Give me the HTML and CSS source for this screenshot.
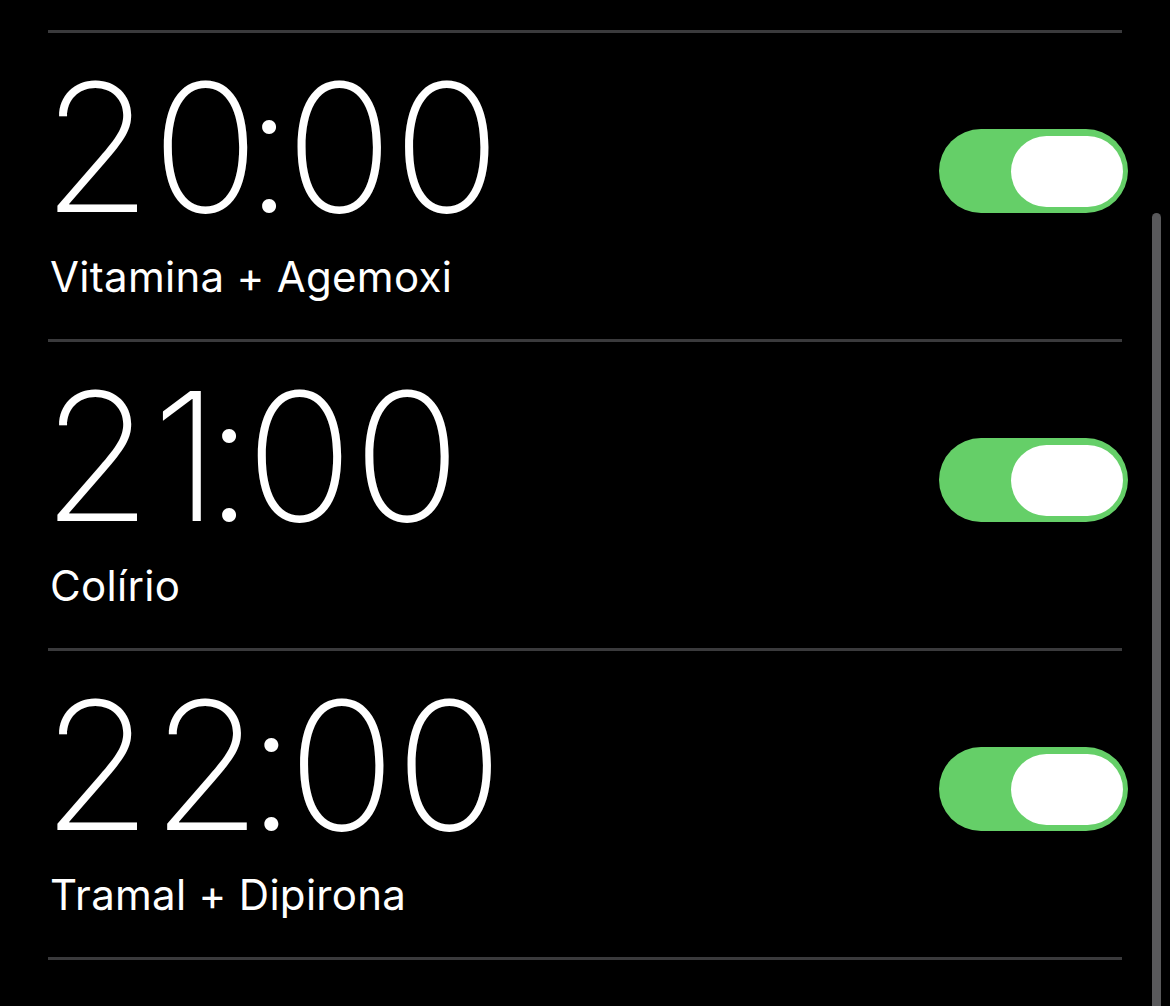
FILE: index.html
```html
<!DOCTYPE html>
<html lang="pt">
<head>
<meta charset="utf-8">
<title>Alarmes</title>
<link rel="stylesheet" href="styles.css">
</head>
<body>
<div class="screen">
  <div class="list">
    <div class="row">
      <div class="info">
        <div class="time">2<span class="tight">0</span><span class="colon">:</span>00</div>
        <div class="label">Vitamina + Agemoxi</div>
      </div>
      <div class="toggle"><div class="knob"></div></div>
    </div>
    <div class="row">
      <div class="info">
        <div class="time">2<span class="tight">1</span><span class="colon">:</span>00</div>
        <div class="label">Colírio</div>
      </div>
      <div class="toggle"><div class="knob"></div></div>
    </div>
    <div class="row">
      <div class="info">
        <div class="time">2<span class="tight">2</span><span class="colon">:</span>00</div>
        <div class="label">Tramal + Dipirona</div>
      </div>
      <div class="toggle"><div class="knob"></div></div>
    </div>
    <div class="row-end"></div>
  </div>
  <div class="scrollbar"></div>
</div>
</body>
</html>
```

FILE: styles.css
```css
html, body {
  margin: 0;
  padding: 0;
  background: #000;
  height: 100%;
  overflow: hidden;
}
.screen {
  position: relative;
  width: 1170px;
  height: 1006px;
  background: #000;
  color: #fff;
  font-family: "Inter", "Liberation Sans", sans-serif;
}
.list {
  width: 1074px;
  margin-left: 48px;
  padding-top: 30px;
}
.row {
  display: flex;
  justify-content: space-between;
  align-items: flex-start;
  border-top: 3px solid #3a3a3c;
  padding-top: 26px;
  padding-bottom: 38.5px;
}
.row-end {
  border-top: 3px solid #3a3a3c;
}
.info {
  display: flex;
  flex-direction: column;
  gap: 14.5px;
}
.time {
  font-size: 178px;
  line-height: 178px;
  font-weight: 200;
  margin-left: -6px;
}
.tight {
  letter-spacing: -15px;
}
.colon {
  letter-spacing: -8px;
}
.label {
  font-size: 42px;
  line-height: 49px;
  font-weight: 400;
  letter-spacing: 0.3px;
  margin-left: 2px;
}
.toggle {
  margin-top: 70px;
  margin-right: -6px;
  width: 189px;
  height: 84px;
  border-radius: 42px;
  background: #65cf68;
  display: flex;
  justify-content: flex-end;
  align-items: center;
  padding-right: 5px;
  box-sizing: border-box;
}
.knob {
  width: 112px;
  height: 71px;
  border-radius: 36px;
  background: #fff;
}
.scrollbar {
  position: absolute;
  left: 1152px;
  top: 213px;
  width: 9px;
  bottom: 0;
  border-radius: 5px 5px 0 0;
  background: #59595b;
}
```
